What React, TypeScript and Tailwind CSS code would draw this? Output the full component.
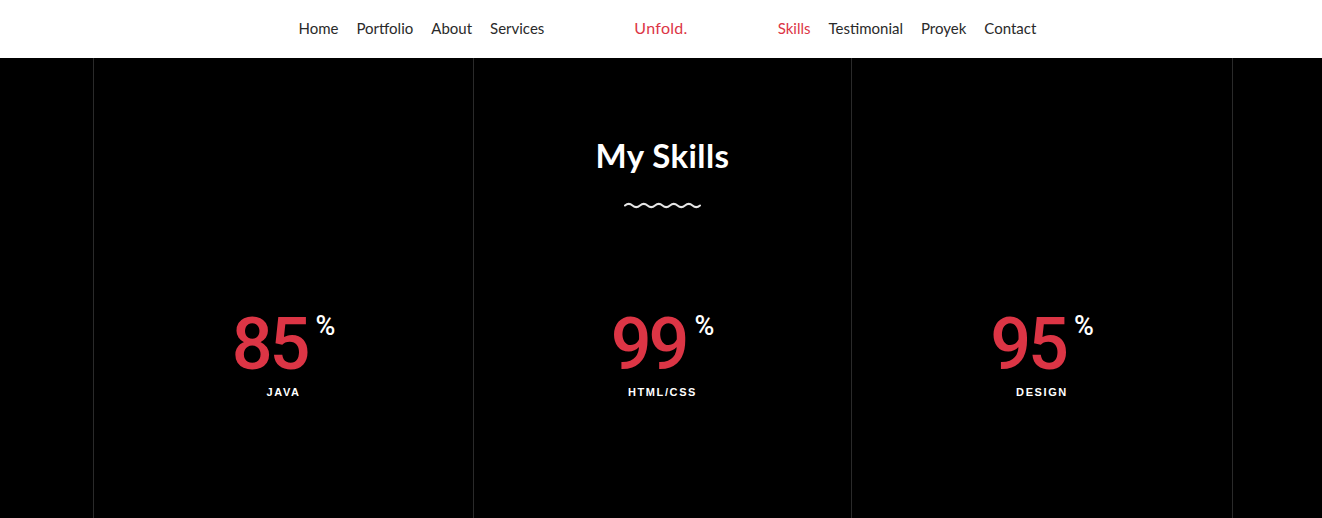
import React from "react";

const leftLinks = ["Home", "Portfolio", "About", "Services"];
const rightLinks = ["Skills", "Testimonial", "Proyek", "Contact"];

const skills = [
  { value: 85, label: "JAVA" },
  { value: 99, label: "HTML/CSS" },
  { value: 95, label: "DESIGN" },
];

function Wave() {
  return (
    <svg width="77" height="9" viewBox="0 0 77 9" className="mx-auto block">
      <path
        d="M1 4.5 q3.75 -3.2 7.5 0 t7.5 0 t7.5 0 t7.5 0 t7.5 0 t7.5 0 t7.5 0 t7.5 0 t7.5 0 t7.5 0"
        fill="none"
        stroke="#e5e5e5"
        strokeWidth="2"
        strokeLinecap="round"
      />
    </svg>
  );
}

function SkillColumn({ value, label, heading }: { value: number; label: string; heading?: boolean }) {
  return (
    <div className="flex flex-col items-center border-l border-[#2a2a2a] last:border-r">
      <div className="h-[251px] w-full pt-[77px]">
        {heading && (
          <>
            <h2 className="text-center text-[33px] leading-[40px] font-bold text-white tracking-[0.4px]">My Skills</h2>
            <div className="mt-[26px]">
              <Wave />
            </div>
          </>
        )}
      </div>
      <div className="flex items-start font-['Roboto',Arial,sans-serif]">
        <span className="text-[72px] leading-none font-medium text-[#dc3545] tracking-[-3px]">{value}</span>
        <span className="ml-[8px] mt-[4px] text-[27px] leading-none font-medium text-white">%</span>
      </div>
      <div className="mt-[3px] text-[11px] leading-4 font-bold tracking-[1.6px] text-white font-['Liberation_Sans',Arial,sans-serif]">
        {label}
      </div>
    </div>
  );
}

export default function App() {
  return (
    <div className="min-h-[518px] bg-black font-['Lato','Noto_Sans',sans-serif]">
      <header className="h-[58px] bg-white grid grid-cols-[1fr_auto_1fr] items-center gap-[90px] text-[15px] pb-[2px]">
        <nav className="flex justify-end gap-[18px] text-[#2a2a2a]">
          {leftLinks.map((l) => (
            <a key={l} href="#">{l}</a>
          ))}
        </nav>
        <a href="#" className="text-[16px] text-[#dc3545] tracking-[0.3px]">Unfold.</a>
        <nav className="flex justify-start gap-[18px] text-[#2a2a2a]">
          {rightLinks.map((l, i) => (
            <a key={l} href="#" className={i === 0 ? "text-[#dc3545]" : ""}>{l}</a>
          ))}
        </nav>
      </header>
      <section className="ml-[93px] grid w-[1140px] grid-cols-[380px_378px_1fr] min-h-[460px]">
        {skills.map((s, i) => (
          <SkillColumn key={s.label} value={s.value} label={s.label} heading={i === 1} />
        ))}
      </section>
    </div>
  );
}
